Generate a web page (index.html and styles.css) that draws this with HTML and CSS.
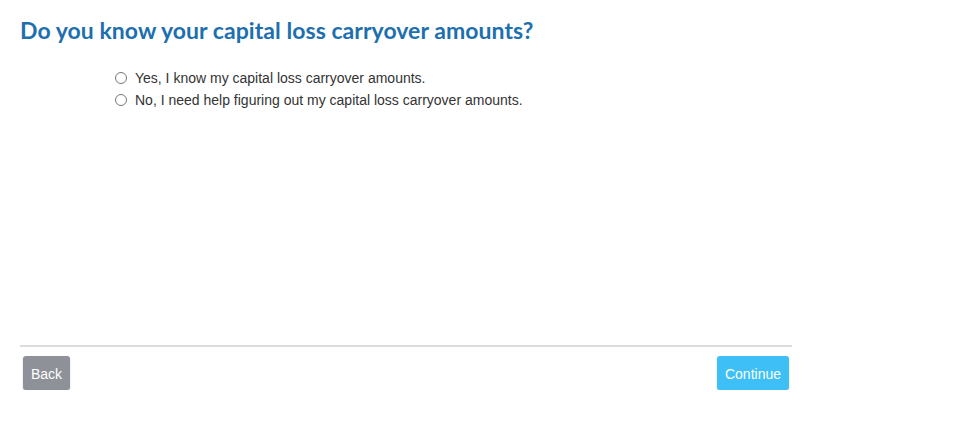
FILE: index.html
```html
<!DOCTYPE html>
<html lang="en">
<head>
  <meta charset="UTF-8" />
  <meta name="viewport" content="width=device-width, initial-scale=1.0" />
  <title>Capital Loss Carryover</title>
  <link rel="stylesheet" href="styles.css">
</head>
<body>
  <div class="page">
    <h1>Do you know your capital loss carryover amounts?</h1>

    <div class="choices">
      <label><input type="radio" name="carryover" value="yes"> Yes, I know my capital loss carryover amounts.</label>
      <label><input type="radio" name="carryover" value="no"> No, I need help figuring out my capital loss carryover amounts.</label>
    </div>

    <div class="buttons">
      <button type="button" class="back">Back</button>
      <button type="button" class="continue">Continue</button>
    </div>
  </div>
</body>
</html>
```

FILE: styles.css
```css
body {
  font-family: "Liberation Sans", Arial, sans-serif;
  background: white;
  margin: 0;
  padding: 0;
}
.page {
  width: 772px;
  padding: 16px 0 0 20px;
}
h1 {
  font-family: Lato, "Open Sans", sans-serif;
  font-weight: 700;
  font-size: 23px;
  line-height: 28px;
  letter-spacing: 0.05px;
  color: #1d6fae;
  margin: 0;
}
.choices {
  margin-top: 25px;
  padding-left: 94px;
  display: flex;
  flex-direction: column;
  gap: 4px;
}
.choices label {
  display: flex;
  align-items: center;
  font-size: 14px;
  color: #333;
  height: 18px;
}
.choices input {
  width: 12px;
  height: 12px;
  margin: 0 8px 0 1px;
}
.buttons {
  margin-top: 236px;
  border-top: 2px solid #dcdcdc;
  padding: 9px 3px 0 3px;
  display: flex;
  justify-content: space-between;
}
.buttons button {
  font-family: "Liberation Sans", Arial, sans-serif;
  font-size: 14px;
  color: white;
  border: none;
  border-radius: 3px;
  height: 34px;
  padding: 2px 8px 0 8px;
  box-shadow: 0 1px 2px rgba(0,0,0,0.2);
}
.back {
  background: #8e9197;
}
.continue {
  background: #3ec0f6;
  padding: 2px 10px 0 10px;
}
```
